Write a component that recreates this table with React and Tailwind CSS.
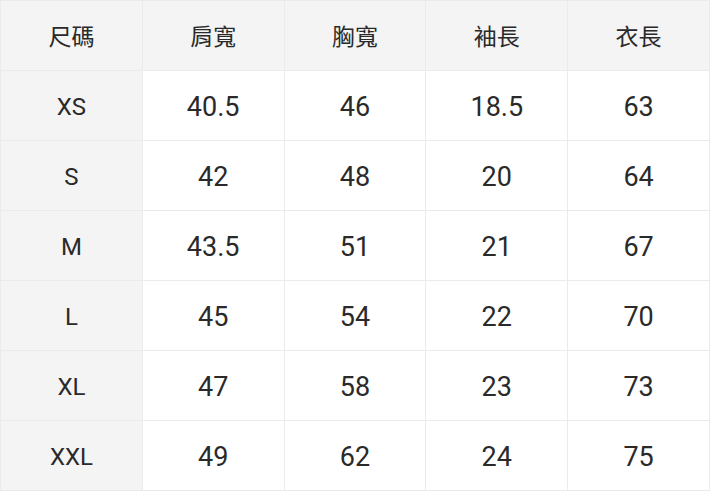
import React from 'react';

const headers = ['尺碼', '肩寬', '胸寬', '袖長', '衣長'];

const rows = [
  ['XS', '40.5', '46', '18.5', '63'],
  ['S', '42', '48', '20', '64'],
  ['M', '43.5', '51', '21', '67'],
  ['L', '45', '54', '22', '70'],
  ['XL', '47', '58', '23', '73'],
  ['XXL', '49', '62', '24', '75'],
];

const App = () => {
  return (
    <div
      className="w-[710px] bg-white text-[#2a2a2a] border-t border-l border-[#ebebeb]"
      style={{ fontFamily: 'Roboto, "Noto Sans CJK TC", sans-serif' }}
    >
      <div className="grid grid-cols-5">
        {headers.map((h) => (
          <div
            key={h}
            className="h-[70px] pt-[6px] flex items-center justify-center bg-[#f4f4f4] border-r border-b border-[#ebebeb] text-[23px]"
          >
            {h}
          </div>
        ))}
        {rows.map((row) =>
          row.map((cell, i) => (
            <div
              key={row[0] + i}
              className={`h-[70px] pt-[3px] flex items-center justify-center border-r border-b border-[#ebebeb] text-[27px] ${
                i === 0 ? 'bg-[#f4f4f4]' : 'bg-white'
              }`}
            >
              {i === 0 ? <span className="text-[24px]">{cell}</span> : cell}
            </div>
          ))
        )}
      </div>
    </div>
  );
};

export default App;
